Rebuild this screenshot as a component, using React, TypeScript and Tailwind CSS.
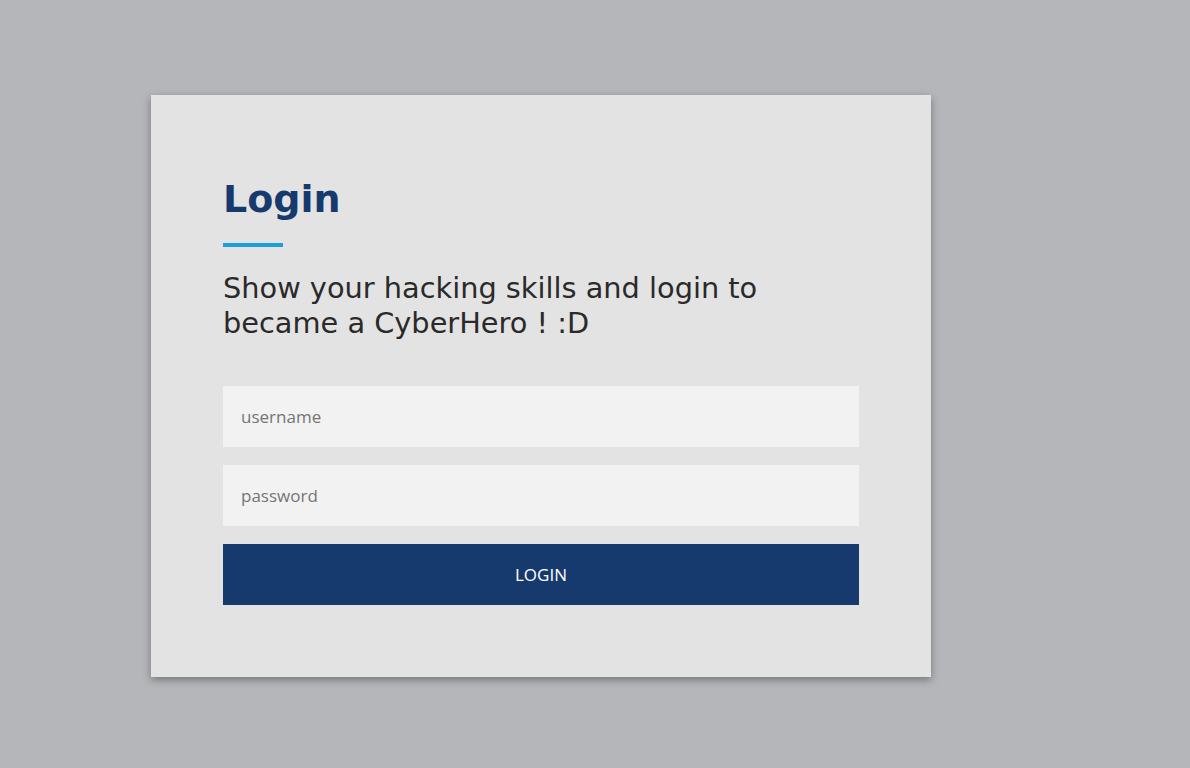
export default function App() {
  return (
    <div className="min-h-screen w-full bg-[#b5b6b9] pt-[95px] pl-[151px]">
      <div className="w-[780px] bg-[#e3e3e3] px-[72px] pt-[72px] pb-[72px] shadow-[0_3px_8px_rgba(0,0,0,0.35)]">
        <h1 className="font-['DejaVu_Sans',sans-serif] text-[38px] font-bold leading-[64px] text-[#173a6e]">
          Login
        </h1>
        <div className="mt-[12px] h-[4px] w-[60px] bg-[#1a9fdb]" />
        <p className="mt-[24px] font-['DejaVu_Sans',sans-serif] text-[28.8px] leading-[35px] text-[#2a2a2a]">
          Show your hacking skills and login to became a CyberHero ! :D
        </p>
        <form className="mt-[45px] flex flex-col gap-[18px]">
          <input
            type="text"
            placeholder="username"
            className="h-[61px] w-full bg-[#f2f2f2] px-[18px] font-['Open_Sans',sans-serif] text-[17px] text-[#333] outline-none placeholder:text-[#757575]"
          />
          <input
            type="password"
            placeholder="password"
            className="h-[61px] w-full bg-[#f2f2f2] px-[18px] font-['Open_Sans',sans-serif] text-[17px] text-[#333] outline-none placeholder:text-[#757575]"
          />
          <button
            type="button"
            className="h-[61px] w-full bg-[#173a6e] font-['Open_Sans',sans-serif] text-[17px] uppercase text-white"
          >
            Login
          </button>
        </form>
      </div>
    </div>
  );
}
